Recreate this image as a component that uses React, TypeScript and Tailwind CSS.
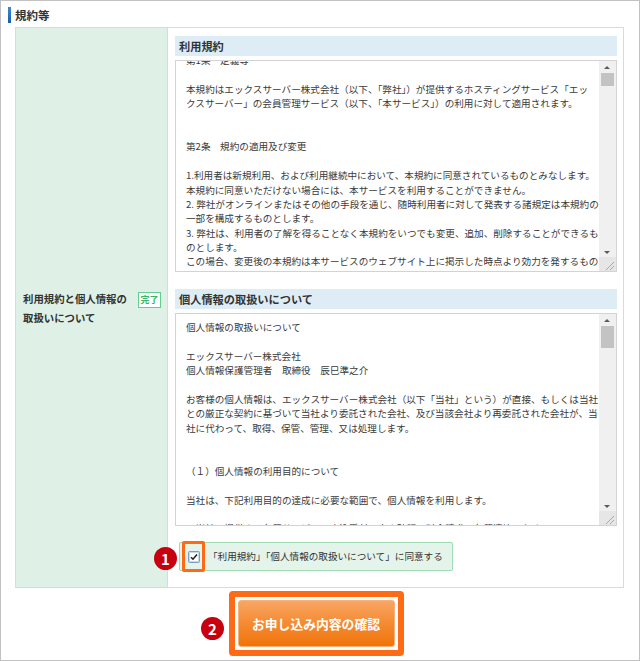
import React from "react";

const terms: string[] = [
  "第1条　定義等",
  "",
  "本規約はエックスサーバー株式会社（以下、「弊社」）が提供するホスティングサービス「エッ",
  "クスサーバー」の会員管理サービス（以下、「本サービス」）の利用に対して適用されます。",
  "",
  "",
  "第2条　規約の適用及び変更",
  "",
  "1.利用者は新規利用、および利用継続中において、本規約に同意されているものとみなします。",
  "本規約に同意いただけない場合には、本サービスを利用することができません。",
  "2. 弊社がオンラインまたはその他の手段を通じ、随時利用者に対して発表する諸規定は本規約の",
  "一部を構成するものとします。",
  "3. 弊社は、利用者の了解を得ることなく本規約をいつでも変更、追加、削除することができるも",
  "のとします。",
  "この場合、変更後の本規約は本サービスのウェブサイト上に掲示した時点より効力を発するもの",
  "とします。",
];

const privacy: string[] = [
  "個人情報の取扱いについて",
  "",
  "エックスサーバー株式会社",
  "個人情報保護管理者　取締役　辰巳準之介",
  "",
  "お客様の個人情報は、エックスサーバー株式会社（以下「当社」という）が直接、もしくは当社",
  "との厳正な契約に基づいて当社より委託された会社、及び当該会社より再委託された会社が、当",
  "社に代わって、取得、保管、管理、又は処理します。",
  "",
  "",
  "（１）個人情報の利用目的について",
  "",
  "当社は、下記利用目的の達成に必要な範囲で、個人情報を利用します。",
  "",
  "・当社の提供する各種サービスの申込受付、本人確認、料金請求、各種連絡のため",
];

function FakeScroll({ thumb }: { thumb: string }) {
  return (
    <div className="flex w-[17px] shrink-0 flex-col bg-[#f0f0f0]">
      <div className="flex h-[12px] items-center justify-center">
        <div className="h-0 w-0 border-x-[3px] border-b-[3px] border-x-transparent border-b-[#5a5a5a]" />
      </div>
      <div className="flex-1">
        <div className={"mx-[2px] bg-[#c3c3c3] " + thumb} />
      </div>
      <div className="flex h-[10px] items-center justify-center">
        <div className="h-0 w-0 border-x-[3px] border-t-[3px] border-x-transparent border-t-[#5a5a5a]" />
      </div>
      <div className="h-[14px] bg-[#e6e6e6]">
        <svg width="17" height="14" viewBox="0 0 17 14">
          <line x1="15" y1="5" x2="7" y2="13" stroke="#a8a8a8" strokeWidth="1" />
          <line x1="15" y1="9" x2="11" y2="13" stroke="#a8a8a8" strokeWidth="1" />
        </svg>
      </div>
    </div>
  );
}

function TextBox({
  lines,
  offset,
  thumb,
  height,
}: {
  lines: string[];
  offset: string;
  thumb: string;
  height: string;
}) {
  return (
    <div className={"flex border border-[#d3d3d3] bg-white " + height}>
      <div className="flex-1 overflow-hidden pl-[10px]">
        <div className={"text-[9.6px] leading-[14.4px] text-[#3a3a3a] " + offset}>
          {lines.map((l, i) => (
            <div key={i} className="h-[14.4px] whitespace-nowrap">
              {l || "\u00a0"}
            </div>
          ))}
        </div>
      </div>
      <FakeScroll thumb={thumb} />
    </div>
  );
}

export default function App() {
  return (
    <div className="relative h-[661px] w-[640px] border border-[#c2c2c2] bg-white font-['Noto_Sans_CJK_JP','Noto_Sans',sans-serif] text-[#333]">
      {/* title */}
      <div className="flex items-center pl-[7px] pt-[6px]">
        <div className="h-[16px] w-[3px] bg-linear-to-b from-[#3b8ad8] to-[#1a5ea8]" />
        <div className="ml-[4px] text-[11.5px] font-bold leading-[16px] text-[#333]">規約等</div>
      </div>

      {/* table */}
      <div className="ml-[14px] mr-[15px] mt-[4px] flex border border-[#dadada]">
        <div className="flex w-[152px] shrink-0 items-center border-r border-[#dadada] bg-[#dff1e6] pl-[7px] pr-[6px]">
          <div className="flex w-full items-start justify-between">
            <div className="text-[10.4px] font-bold leading-[19px] text-[#333]">
              利用規約と個人情報の
              <br />
              取扱いについて
            </div>
            <div className="mt-[3px] flex h-[16px] w-[23px] items-center justify-center border border-[#62cf8e] bg-white text-[9px] font-bold leading-none text-[#3ab46a]">
              完了
            </div>
          </div>
        </div>

        <div className="flex-1 px-[7px] pb-[16px] pt-[8px]">
          <div className="h-[20px] bg-[#deedf5] pl-[4px] text-[11.2px] font-bold leading-[20px] text-[#333]">
            利用規約
          </div>
          <div className="mt-[4px]">
            <TextBox lines={terms} offset="mt-[-8px]" thumb="h-[13px]" height="h-[212px]" />
          </div>

          <div className="mt-[17px] h-[20px] bg-[#deedf5] pl-[4px] text-[11.2px] font-bold leading-[20px] text-[#333]">
            個人情報の取扱いについて
          </div>
          <div className="mt-[4px]">
            <TextBox lines={privacy} offset="mt-[6px]" thumb="h-[22px]" height="h-[213px]" />
          </div>

          <div className="ml-[4px] mt-[16px] flex h-[29px] w-[274px] items-center rounded-[2px] border border-[#9edcb4] bg-[#e4f4ea] pl-[2px]">
            <div className="flex h-[31px] w-[23px] items-center justify-center rounded-[2px] border-[3px] border-[#ff6b14]">
              <svg width="12" height="12" viewBox="0 0 12 12">
                <rect x="0.5" y="0.5" width="11" height="11" rx="1" fill="#c9d8ec" stroke="#7f9cc4" />
                <rect x="2" y="2" width="8" height="8" fill="#ffffff" />
                <path d="M3 6.2 L5 8.2 L9 3.6" fill="none" stroke="#222" strokeWidth="1.6" />
              </svg>
            </div>
            <div className="ml-[3px] text-[9.6px] leading-none text-[#333]">
              「利用規約」「個人情報の取扱いについて」に同意する
            </div>
          </div>
        </div>
      </div>

      {/* button */}
      <div className="mt-[3px] flex justify-center pr-[8px]">
        <div className="h-[65px] w-[175px] rounded-[4px] border-[6px] border-[#fd6b17] bg-white p-[3px]">
          <div className="flex h-full w-full items-center justify-center rounded-[3px] border border-[#f6b27c] bg-linear-to-b from-[#f8a661] via-[#f58a30] to-[#f07400] text-[12.8px] font-bold text-white">
            お申し込み内容の確認
          </div>
        </div>
      </div>

      {/* annotation badges */}
      <div className="absolute left-[153px] top-[546px] flex h-[23px] w-[23px] items-center justify-center rounded-full bg-[#c6000f] text-[15px] font-bold leading-none text-white">
        1
      </div>
      <div className="absolute left-[200px] top-[616px] flex h-[23px] w-[23px] items-center justify-center rounded-full bg-[#c6000f] text-[15px] font-bold leading-none text-white">
        2
      </div>
    </div>
  );
}
